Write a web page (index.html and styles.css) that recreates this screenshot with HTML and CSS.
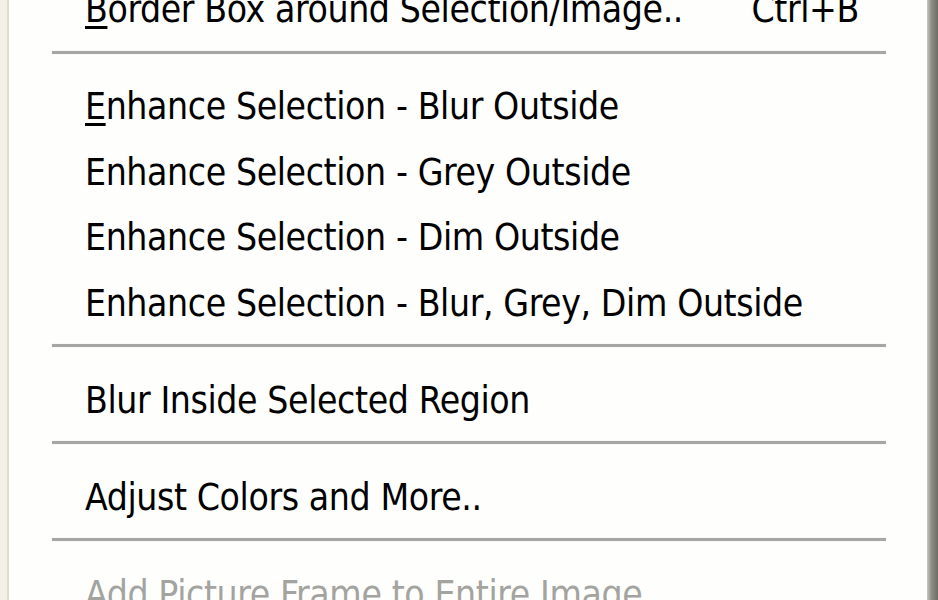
FILE: index.html
```html
<!DOCTYPE html>
<html lang="en">
<head>
    <meta charset="UTF-8">
    <title>Effects Menu</title>
    <link rel="stylesheet" href="styles.css">
</head>
<body>

    <div class="menu">
        <div class="menu-gutter"></div>

        <ul class="menu-list">
            <li class="menu-item">
                <span><u>B</u>order Box around Selection/Image..</span>
                <span class="shortcut">Ctrl+B</span>
            </li>
            <li class="separator"></li>
            <li class="menu-item"><span><u>E</u>nhance Selection - Blur Outside</span></li>
            <li class="menu-item"><span>Enhance Selection - Grey Outside</span></li>
            <li class="menu-item"><span>Enhance Selection - Dim Outside</span></li>
            <li class="menu-item"><span>Enhance Selection - Blur, Grey, Dim Outside</span></li>
            <li class="separator"></li>
            <li class="menu-item"><span>Blur Inside Selected Region</span></li>
            <li class="separator"></li>
            <li class="menu-item"><span>Adjust Colors and More..</span></li>
            <li class="separator"></li>
            <li class="menu-item disabled"><span>Add Picture Frame to Entire Image..</span></li>
        </ul>

        <div class="menu-edge"></div>
    </div>

</body>
</html>
```

FILE: styles.css
```css
body {
    margin: 0;
    padding: 0;
    background-color: #fefefd;
    font-family: "DejaVu Sans Condensed", "DejaVu Sans", sans-serif;
    font-stretch: condensed;
    overflow: hidden;
}

.menu {
    display: flex;
    height: 600px;
    background-color: #fefefd;
}

.menu-gutter {
    width: 7px;
    flex-shrink: 0;
    background-color: #f3f1e7;
    border-right: 2px solid #dedbcf;
}

.menu-edge {
    width: 11px;
    flex-shrink: 0;
    background: linear-gradient(to right, #c9c8c0, #8e8d86 40%, #6c6b64);
}

.menu-list {
    flex: 1;
    list-style: none;
    margin: -29px 0 0 0;
    padding: 0;
}

.menu-item {
    display: flex;
    justify-content: space-between;
    height: 65.5px;
    box-sizing: border-box;
    padding: 14px 68px 0 76px;
    font-size: 37px;
    line-height: 50px;
    letter-spacing: -0.4px;
    color: #000;
    white-space: nowrap;
}

.menu-item u {
    text-decoration-thickness: 3px;
    text-underline-offset: 4px;
}

.menu-item.disabled {
    color: #a3a3a0;
}

.separator {
    height: 31.5px;
    display: flex;
    align-items: center;
    margin: 0 41px 0 43px;
}

.separator::before {
    content: "";
    flex: 1;
    height: 3px;
    background-color: #a6a6a4;
    box-shadow: 0 0 1px #c8c8c6;
}
```
